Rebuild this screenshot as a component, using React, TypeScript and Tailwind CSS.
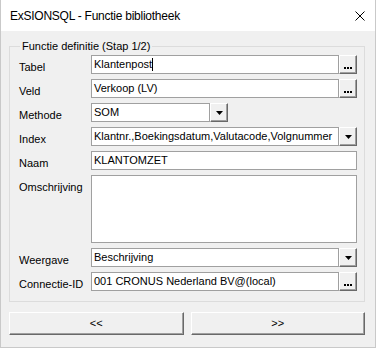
import React from "react";

const font = "font-['Liberation_Sans',Arial,sans-serif]";

function Dots() {
  return (
    <div className="w-[18px] h-[19px] shrink-0 bg-[#f0f0f0] border border-t-white border-l-white border-r-[#696969] border-b-[#696969] shadow-[inset_-1px_-1px_0_#a0a0a0] flex items-end justify-center gap-[1px] pb-[4px]">
      <span className="w-[2px] h-[2px] bg-black" />
      <span className="w-[2px] h-[2px] bg-black" />
      <span className="w-[2px] h-[2px] bg-black" />
    </div>
  );
}

function Arrow() {
  return (
    <div className="w-[18px] h-[19px] shrink-0 bg-[#f0f0f0] border border-t-white border-l-white border-r-[#696969] border-b-[#696969] shadow-[inset_-1px_-1px_0_#a0a0a0] flex items-center justify-center pt-[1px]">
      <svg width="7" height="4" viewBox="0 0 7 4">
        <polygon points="0,0 7,0 3.5,4" fill="#000" />
      </svg>
    </div>
  );
}

function Field({
  value,
  kind,
  cursor,
  width,
}: {
  value: string;
  kind?: "dots" | "arrow";
  cursor?: boolean;
  width?: string;
}) {
  return (
    <div className={`flex h-[19px] ${width ?? "flex-1"}`}>
      <div className="flex-1 min-w-0 bg-white border border-[#a0a0a0] flex items-center px-[2px] overflow-hidden">
        <span className="text-[11px] leading-[17px] whitespace-nowrap">{value}</span>
        {cursor && <span className="w-px h-[13px] bg-black" />}
      </div>
      {kind === "dots" && <Dots />}
      {kind === "arrow" && <Arrow />}
    </div>
  );
}

function Row({ label, children }: { label: string; children: React.ReactNode }) {
  return (
    <div className="flex items-start">
      <span className="w-[72px] shrink-0 pt-[5px] text-[11px] leading-[14px]">{label}</span>
      {children}
    </div>
  );
}

export default function App() {
  return (
    <div className={`w-[376px] h-[348px] bg-[#f0f0f0] border-x border-b border-[#c9c9c9] flex flex-col text-black ${font}`}>
      <div className="h-[31px] shrink-0 bg-white flex items-center justify-between pl-[9px] pr-[10px]">
        <span className="text-[12px] tracking-[-0.25px]">ExSIONSQL - Functie bibliotheek</span>
        <svg width="10" height="10" viewBox="0 0 10 10">
          <path d="M0.5 0.5 L9.5 9.5 M9.5 0.5 L0.5 9.5" stroke="#000" strokeWidth="1" />
        </svg>
      </div>

      <div className="pl-[8px] w-[364px]">
        <fieldset className="mt-[7px] border border-[#dcdcdc] pl-[9px] pr-[7px] pb-[10px]">
          <legend className="ml-[1px] px-[2px] text-[11px] leading-[16px]">Functie definitie (Stap 1/2)</legend>
          <div className="flex flex-col gap-[5px] pt-[1px]">
            <Row label="Tabel">
              <Field value="Klantenpost" kind="dots" cursor />
            </Row>
            <Row label="Veld">
              <Field value="Verkoop (LV)" kind="dots" />
            </Row>
            <Row label="Methode">
              <Field value="SOM" kind="arrow" width="w-[137px]" />
            </Row>
            <Row label="Index">
              <Field value="Klantnr.,Boekingsdatum,Valutacode,Volgnummer" kind="arrow" />
            </Row>
            <Row label="Naam">
              <Field value="KLANTOMZET" />
            </Row>
            <Row label="Omschrijving">
              <div className="flex-1 h-[68px] bg-white border border-[#a0a0a0]" />
            </Row>
            <Row label="Weergave">
              <Field value="Beschrijving" kind="arrow" />
            </Row>
            <Row label="Connectie-ID">
              <Field value="001 CRONUS Nederland BV@(local)" kind="dots" />
            </Row>
          </div>
        </fieldset>

        <div className="grid grid-cols-2 gap-[7px] mt-[10px]">
          <button className="h-[23px] bg-[#f0f0f0] border border-t-white border-l-white border-r-[#696969] border-b-[#696969] shadow-[inset_-1px_-1px_0_#a0a0a0] text-[11px]">
            &lt;&lt;
          </button>
          <button className="h-[23px] bg-[#f0f0f0] border border-t-white border-l-white border-r-[#696969] border-b-[#696969] shadow-[inset_-1px_-1px_0_#a0a0a0] text-[11px]">
            &gt;&gt;
          </button>
        </div>
      </div>
    </div>
  );
}
